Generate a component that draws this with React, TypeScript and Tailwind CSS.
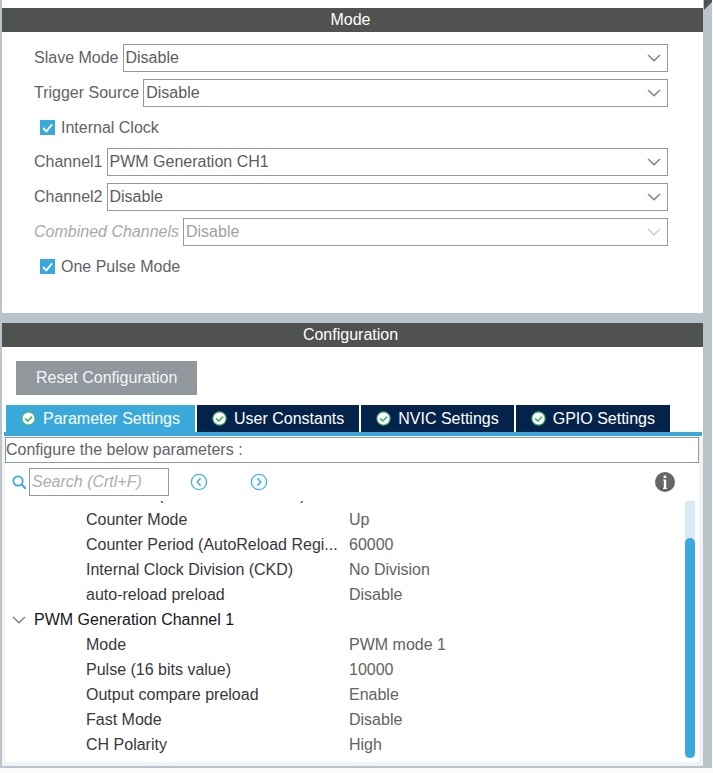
import { useState, type ReactNode } from "react";

const PARAMETERS = [
  { name: "Prescaler (PSC - 16 bits value)", value: "" },
  { name: "Counter Mode", value: "Up" },
  { name: "Counter Period (AutoReload Regi...", value: "60000" },
  { name: "Internal Clock Division (CKD)", value: "No Division" },
  { name: "auto-reload preload", value: "Disable" },
];

const PWM_PARAMETERS = [
  { name: "Mode", value: "PWM mode 1" },
  { name: "Pulse (16 bits value)", value: "10000" },
  { name: "Output compare preload", value: "Enable" },
  { name: "Fast Mode", value: "Disable" },
  { name: "CH Polarity", value: "High" },
];

const TABS = ["Parameter Settings", "User Constants", "NVIC Settings", "GPIO Settings"];

function Chevron({ className }: { className: string }) {
  return (
    <svg width="14" height="8" viewBox="0 0 14 8" fill="none" stroke="currentColor" strokeWidth="1.5" className={className}>
      <path d="M1 1l6 5.6L13 1" />
    </svg>
  );
}

function PanelTitle({ children }: { children: ReactNode }) {
  return <h2 className="h-6 bg-[#505250] pr-1 text-center leading-6 text-white">{children}</h2>;
}

function SelectRow({ id, label, options, disabled }: { id: string; label: string; options: string[]; disabled?: boolean }) {
  return (
    <div className="flex h-7 items-center gap-1">
      <label htmlFor={id} className={disabled ? "shrink-0 italic text-[#a8a8a8]" : "shrink-0"}>
        {label}
      </label>
      <div className="relative min-w-0 flex-1">
        <select
          id={id}
          disabled={disabled}
          className="block h-7 w-full appearance-none border border-[#929aa1] bg-white pl-[2px] pr-6 text-[#5c5c60] disabled:text-[#a0a0a4] disabled:opacity-100"
        >
          {options.map((o) => (
            <option key={o}>{o}</option>
          ))}
        </select>
        <Chevron
          className={
            disabled
              ? "pointer-events-none absolute right-[7px] top-[10px] text-[#cfcfcf]"
              : "pointer-events-none absolute right-[7px] top-[10px] text-[#858585]"
          }
        />
      </div>
    </div>
  );
}

function CheckRow({ label }: { label: string }) {
  return (
    <label className="flex h-[27px] items-center gap-[6px] pl-[6px]">
      <span className="relative size-[15px]">
        <input type="checkbox" defaultChecked className="peer block size-[15px] appearance-none border border-[#39a9dc] checked:bg-[#39a9dc]" />
        <svg
          viewBox="0 0 15 15"
          fill="none"
          stroke="white"
          strokeWidth="1.8"
          className="pointer-events-none absolute inset-0 hidden size-[15px] peer-checked:block"
        >
          <path d="M3 8l3.4 3.4L12 4.4" />
        </svg>
      </span>
      {label}
    </label>
  );
}

function TabCheck() {
  return (
    <svg width="15" height="15" viewBox="0 0 15 15" fill="none">
      <circle cx="7.5" cy="7.5" r="6.6" fill="white" stroke="#4fae6c" strokeWidth="1.2" />
      <path d="M4 7.4l2.8 2.7 4.3-4.4" stroke="#4fb573" strokeWidth="1.7" />
    </svg>
  );
}

function ParameterRow({ name, value }: { name: string; value: string }) {
  return (
    <tr className="h-[25px]">
      <td className="whitespace-nowrap p-0 pl-[81px] text-[#38383c]">{name}</td>
      <td className="p-0">{value}</td>
    </tr>
  );
}

function ModePanel() {
  return (
    <section>
      <PanelTitle>Mode</PanelTitle>
      <div className="flex flex-col gap-[7px] bg-white pb-[33px] pl-8 pr-[35px] pt-3">
        <SelectRow id="slave-mode" label="Slave Mode" options={["Disable"]} />
        <SelectRow id="trigger-source" label="Trigger Source" options={["Disable"]} />
        <CheckRow label="Internal Clock" />
        <SelectRow id="channel1" label="Channel1" options={["PWM Generation CH1", "Disable"]} />
        <SelectRow id="channel2" label="Channel2" options={["Disable"]} />
        <SelectRow id="combined" label="Combined Channels" options={["Disable"]} disabled />
        <CheckRow label="One Pulse Mode" />
      </div>
    </section>
  );
}

function Toolbar() {
  return (
    <div className="flex h-[38px] items-center pl-[7px] pr-6">
      <label htmlFor="search" title="Search">
        <svg width="15" height="15" viewBox="0 0 15 15" fill="none" stroke="#39a9dc">
          <circle cx="6" cy="6" r="4.7" strokeWidth="1.7" />
          <path d="M9.5 9.5l4.3 4.3" strokeWidth="2" />
        </svg>
      </label>
      <input
        id="search"
        type="text"
        placeholder="Search (Crtl+F)"
        className="ml-[2px] h-7 w-[140px] border border-[#929aa1] px-[2px] italic placeholder:text-[#adadad]"
      />
      <button type="button" aria-label="Previous match" className="ml-[21px]">
        <svg width="18" height="18" viewBox="0 0 18 18" fill="none" stroke="#4db5e2" strokeWidth="1.4" className="block">
          <circle cx="9" cy="9" r="7.6" />
          <path d="M10.6 5.4L7.2 9l3.4 3.6" strokeWidth="1.7" />
        </svg>
      </button>
      <button type="button" aria-label="Next match" className="ml-[42px]">
        <svg width="18" height="18" viewBox="0 0 18 18" fill="none" stroke="#4db5e2" strokeWidth="1.4" className="block">
          <circle cx="9" cy="9" r="7.6" />
          <path d="M7.4 5.4l3.4 3.6-3.4 3.6" strokeWidth="1.7" />
        </svg>
      </button>
      <button type="button" aria-label="Information" className="ml-auto">
        <svg width="20" height="20" viewBox="0 0 20 20" className="block">
          <circle cx="10" cy="10" r="10" fill="#666" />
          <path d="M8.6 3.4h2.6v2.5H8.6zM8 7.4h3.2v8.4h.8v1.2H8v-1.2h.8V8.6H8z" fill="white" />
        </svg>
      </button>
    </div>
  );
}

function ParameterTree() {
  return (
    <div className="flex h-[261px] overflow-hidden">
      <div className="min-w-0 flex-1 overflow-hidden">
        <table className="-mt-[19px] w-full table-fixed border-collapse text-left">
          <colgroup>
            <col className="w-[344px]" />
            <col />
          </colgroup>
          <tbody>
            {PARAMETERS.map((p) => (
              <ParameterRow key={p.name} {...p} />
            ))}
            <tr className="h-[25px]">
              <th colSpan={2} className="p-0 pl-[7px] font-normal text-[#18181c]">
                <button type="button" className="flex items-center gap-2">
                  <Chevron className="text-[#858585]" />
                  PWM Generation Channel 1
                </button>
              </th>
            </tr>
            {PWM_PARAMETERS.map((p) => (
              <ParameterRow key={p.name} {...p} />
            ))}
          </tbody>
        </table>
      </div>
      <div className="mb-1 mr-1 flex w-[10px] flex-col bg-[#dae9f6] pt-[37px]">
        <div className="flex-1 rounded-full bg-[#39a9dc]" />
      </div>
    </div>
  );
}

function ConfigurationPanel() {
  const [active, setActive] = useState(TABS[0]);

  return (
    <section>
      <PanelTitle>Configuration</PanelTitle>
      <div className="border-b-4 border-[#f0f2f4] bg-white pt-[14px]">
        <button type="button" className="ml-[14px] block h-[34px] bg-[#90979d] px-5 text-[#f4f5f6]">
          Reset Configuration
        </button>
        <div role="tablist" className="ml-[2px] mr-[1px] mt-[10px] flex gap-[2px] border-b-4 border-[#39a9dc] pl-[2px]">
          {TABS.map((tab) => (
            <button
              key={tab}
              type="button"
              role="tab"
              aria-selected={tab === active}
              onClick={() => setActive(tab)}
              className={
                tab === active
                  ? "flex h-[27px] items-center gap-[7px] whitespace-nowrap bg-[#39a9dc] px-[15px] text-white"
                  : "flex h-[27px] items-center gap-[7px] whitespace-nowrap bg-[#03234b] px-[15px] text-white"
              }
            >
              <TabCheck />
              {tab}
            </button>
          ))}
        </div>
        <div className="border-l-[3px] border-r-4 border-[#f0f2f4] pt-[1px]">
          <p className="h-[26px] border border-[#929aa1] leading-6">Configure the below parameters :</p>
          <Toolbar />
          <ParameterTree />
        </div>
      </div>
    </section>
  );
}

export default function App() {
  return (
    <div className="min-h-screen bg-[#f8fafb] pr-px font-['Liberation_Sans',Arial,sans-serif] text-[16px] leading-6 text-[#626266]">
      <div className="flex bg-[#b8c4ca] pb-[2px] pl-[2px]">
        <main className="min-w-0 flex-1">
          <div className="h-2 bg-white" />
          <ModePanel />
          <div className="h-[10px]" />
          <ConfigurationPanel />
        </main>
        <div className="w-[9px] shrink-0">
          <svg width="9" height="10" viewBox="0 0 9 10" className="block">
            <path d="M1 0h8v2L1 10z" fill="#505250" />
          </svg>
        </div>
      </div>
    </div>
  );
}
